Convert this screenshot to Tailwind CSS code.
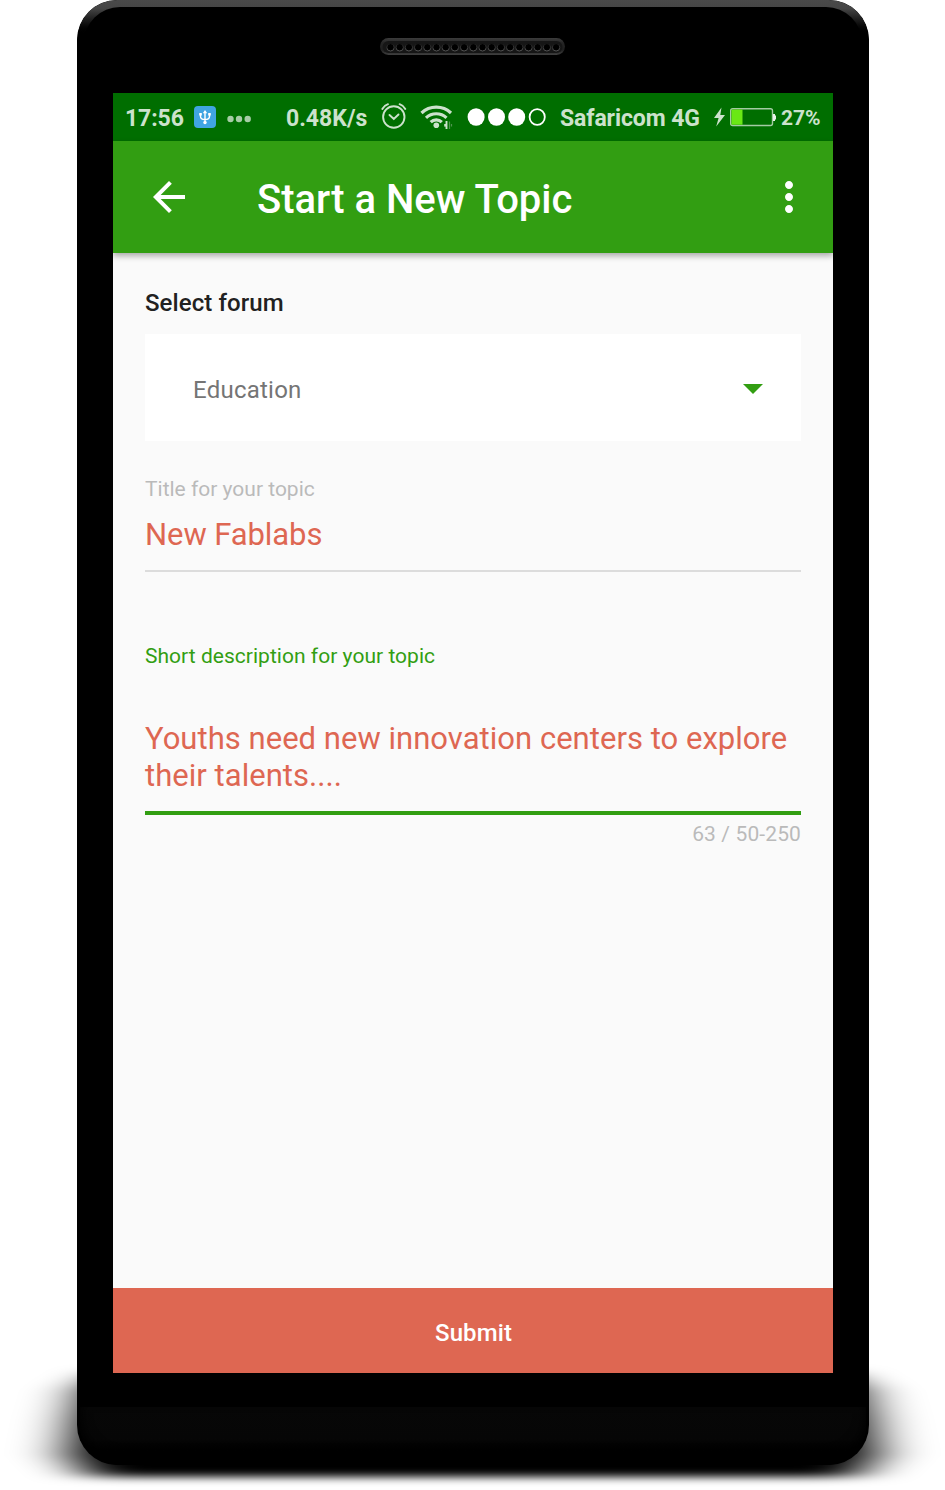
<!DOCTYPE html>
<html lang="en">
<head>
<meta charset="utf-8">
<title>Start a New Topic</title>
<script src="https://cdn.jsdelivr.net/npm/@tailwindcss/browser@4"></script>
</head>
<body class="bg-white overflow-hidden font-['Roboto',sans-serif]">
<div class="relative w-[945px] h-[1490px] overflow-hidden pl-[77px]">
  <!-- ground shadow -->
  <svg class="absolute left-0 top-[1340px]" width="945" height="150" viewBox="0 0 945 150">
    <defs>
      <filter id="soft" filterUnits="userSpaceOnUse" x="-60" y="-20" width="1065" height="200"><feGaussianBlur stdDeviation="27 4"/></filter>
    </defs>
    <path filter="url(#soft)" d="M112 32L84 50L75 80L68 115L90 137H855L877 115L870 80L861 50L833 32Z"/>
  </svg>
  <div class="relative flex flex-col w-[792px] h-[1465px] rounded-[40px] bg-black overflow-hidden">
    <!-- bezel highlights -->
    <div class="absolute inset-x-0 top-0 h-[44px] rounded-t-[40px] bg-linear-to-b from-[#4a4a4a] via-[#454545] via-20% to-black to-80%"></div>
    <div class="absolute left-[7px] right-[7px] top-[7px] h-[70px] rounded-t-[36px] bg-black"></div>
    <div class="absolute inset-x-[3px] bottom-0 h-[58px] bg-linear-to-b from-[#070707] via-[#060606] via-55% to-black rounded-b-[40px] shadow-[inset_0_-8px_12px_#000]"></div>

    <!-- speaker -->
    <div class="relative h-[93px] pt-[38px] flex justify-center">
      <svg class="-ml-px" width="186" height="17" viewBox="0 0 186 17">
        <defs>
          <linearGradient id="rim" x1="0" y1="0" x2="0" y2="1"><stop offset="0" stop-color="#3c3c3c"/><stop offset=".3" stop-color="#242424"/><stop offset=".7" stop-color="#202020"/><stop offset="1" stop-color="#404040"/></linearGradient>
          <linearGradient id="hole" x1="0" y1="0" x2="0" y2="1"><stop offset="0" stop-color="#181818"/><stop offset="1" stop-color="#555"/></linearGradient>
        </defs>
        <rect x="0" y="0" width="185" height="17" rx="8.5" fill="url(#rim)"/>
        <rect x="2.500" y="3" width="180" height="12" rx="6" fill="#161616"/>
        <g fill="#000" stroke="url(#hole)" stroke-width="1">
          <circle cx="10.500" cy="9.300" r="3.700"/><circle cx="19.700" cy="9.300" r="3.700"/><circle cx="28.900" cy="9.300" r="3.700"/><circle cx="38.100" cy="9.300" r="3.700"/><circle cx="47.300" cy="9.300" r="3.700"/><circle cx="56.500" cy="9.300" r="3.700"/><circle cx="65.700" cy="9.300" r="3.700"/><circle cx="74.900" cy="9.300" r="3.700"/><circle cx="84.100" cy="9.300" r="3.700"/><circle cx="93.300" cy="9.300" r="3.700"/><circle cx="102.500" cy="9.300" r="3.700"/><circle cx="111.700" cy="9.300" r="3.700"/><circle cx="120.900" cy="9.300" r="3.700"/><circle cx="130.100" cy="9.300" r="3.700"/><circle cx="139.300" cy="9.300" r="3.700"/><circle cx="148.500" cy="9.300" r="3.700"/><circle cx="157.700" cy="9.300" r="3.700"/><circle cx="166.900" cy="9.300" r="3.700"/><circle cx="176.100" cy="9.300" r="3.700"/>
        </g>
      </svg>
    </div>

    <div class="relative ml-9 w-[720px] h-[1280px] bg-[#fafafa] flex flex-col">
      <!-- status bar -->
      <div class="h-12 shrink-0 bg-[#006e00] flex items-center pl-3 text-[23px] leading-[48px] font-bold text-[#cce2cc] whitespace-nowrap">
        <span class="w-[69px] shrink-0 pt-[4px] tracking-[-0.1px]">17:56</span>
        <svg class="shrink-0 w-[22px] h-[22px] mr-[10px]" viewBox="0 0 22 22">
          <rect width="22" height="22" rx="4" fill="#40a5e2"/>
          <path d="M11 5.500V17M6.500 8V10.500Q6.500 13.500 11 13.500Q15.500 13.500 15.500 10.500V8" fill="none" stroke="#fff" stroke-width="1.400"/>
          <path d="M11 4L13.200 7.200H8.800ZM5.200 7h2.600v2.500H5.200ZM14.200 7h2.600v2.500h-2.600Z" fill="#fff"/><circle cx="11" cy="16.500" r="1.700" fill="#fff"/>
        </svg>
        <svg class="shrink-0 w-[28px] h-2 mr-[32px] mt-[3px]" viewBox="0 0 28 8" fill="#a6cda6"><circle cx="4.500" cy="4" r="3.200"/><circle cx="13" cy="4" r="3.200"/><circle cx="21.700" cy="4" r="3.200"/></svg>
        <span class="w-[95px] shrink-0 pt-[4px]">0.48K/s</span>
        <svg class="shrink-0 w-[26px] h-[26px] mr-[13px] -mt-[2px]" viewBox="0 0 26 26" fill="none" stroke="#cce2cc" stroke-width="1.900" stroke-linecap="round">
          <circle cx="12.800" cy="14" r="10.700"/><path d="M8.500 12L12.800 16L17.500 11.500M1.300 6Q3 2.500 7 1.200M24.300 6Q22.600 2.500 18.600 1.200"/>
        </svg>
        <svg class="shrink-0 w-[34px] h-[26px] mr-[13px]" viewBox="0 0 34 26" fill="none" stroke="#cce2cc" stroke-width="3.200">
          <path d="M1.500 9A21.500 21.500 0 0 1 31 9M6 13.800A15 15 0 0 1 26.500 13.800M10.700 18.200A8 8 0 0 1 21.800 18.200"/>
          <circle cx="16.300" cy="21.300" r="2.800" fill="#cce2cc" stroke="none"/>
          <path d="M26.500 17V25" stroke-width="1.900"/><path d="M24.200 21.300H26.500" stroke-width="2.600"/><path d="M29.500 17.500V25M31.500 20V22.500" stroke="#4f964f" stroke-width="1.200"/>
        </svg>
        <svg class="shrink-0 w-[80px] h-[18px] mr-[13px]" viewBox="0 0 80 18" fill="#fff"><ellipse cx="9.100" cy="9" rx="8.500" ry="8.800"/><ellipse cx="29.500" cy="9" rx="8.500" ry="8.800"/><ellipse cx="49.700" cy="9" rx="8.500" ry="8.800"/><ellipse cx="70.200" cy="9" rx="7.600" ry="7.900" fill="none" stroke="#fff" stroke-width="1.800"/></svg>
        <span class="w-[153px] shrink-0 pt-[4px] tracking-[-0.1px]">Safaricom 4G</span>
        <svg class="shrink-0 w-[64px] h-[22px] mr-[4px]" viewBox="0 0 64 22">
          <path d="M8.500 1.500L1 12H5.600L3.200 20.500L12 9H7.300Z" fill="#cce2cc"/>
          <rect x="17.700" y="2.700" width="41.800" height="16.800" rx="2" fill="none" stroke="#a3cba3" stroke-width="1.400"/>
          <rect x="18.500" y="3.500" width="11" height="15.200" fill="#6ae815"/>
          <path d="M60 8h2v1.500h1v4h-1V15h-2Z" fill="#e8f3e8"/>
        </svg>
        <span class="pt-[2px] text-[21px]">27%</span>
      </div>
      <!-- app bar -->
      <div class="relative h-28 shrink-0 bg-[#329e12] flex items-center pl-8 pr-5 shadow-[0_3px_6px_rgba(0,0,0,0.32)] text-white">
        <svg class="w-12 h-12" viewBox="0 0 24 24" fill="#fff"><path d="M20 11H7.830l5.590-5.590L12 4l-8 8 8 8 1.410-1.410L7.830 13H20v-2z"/></svg>
        <div class="ml-16 pt-[6px] text-[40px] leading-[48px] font-medium whitespace-nowrap">Start a New Topic</div>
        <svg class="ml-auto w-12 h-12" viewBox="0 0 24 24" fill="#fff"><path d="M12 8c1.100 0 2-.9 2-2s-.9-2-2-2-2 .9-2 2 .9 2 2 2zm0 2c-1.100 0-2 .9-2 2s.9 2 2 2 2-.9 2-2-.9-2-2-2zm0 6c-1.100 0-2 .9-2 2s.9 2 2 2 2-.9 2-2-.9-2-2-2z"/></svg>
      </div>
      <!-- form -->
      <div class="flex-1 px-8 pt-9 flex flex-col">
        <div class="text-[24px] leading-7 font-medium text-[#212121] tracking-[0.09px]">Select forum</div>
        <div class="mt-[17px] h-[107px] shrink-0 bg-white flex items-center justify-between pl-12 pr-[38px]">
          <span class="pt-1 text-[24px] leading-7 text-[#757575] tracking-[0.24px]">Education</span>
          <svg class="w-5 h-[10px] mt-[2px]" viewBox="0 0 20 10"><path d="M0 0H20L10 10Z" fill="#329e12"/></svg>
        </div>
        <div class="mt-9 text-[21px] leading-6 text-[#bababa]">Title for your topic</div>
        <div class="mt-[15px] text-[31px] leading-[38px] text-[#de6752] tracking-[-0.08px]">New Fablabs</div>
        <div class="mt-4 h-[2px] bg-[#dcdcdc]"></div>
        <div class="mt-[72px] text-[21px] leading-6 text-[#329e12] tracking-[0.03px]">Short description for your topic</div>
        <div class="mt-[52px] text-[31px] leading-[37px] text-[#de6752] whitespace-nowrap tracking-[0.03px]">Youths need new innovation centers to explore<br>their talents....</div>
        <div class="mt-[17px] h-1 bg-[#329e12]"></div>
        <div class="mt-[7px] text-[21px] leading-6 text-[#bababa] text-right tracking-[0.12px]">63 / 50-250</div>
      </div>
      <div class="h-[85px] shrink-0 bg-[#de6752] flex items-center justify-center pt-1 pl-px text-[24px] font-medium text-white tracking-[0.1px]">Submit</div>
    </div>
  </div>
</div>
</body>
</html>
